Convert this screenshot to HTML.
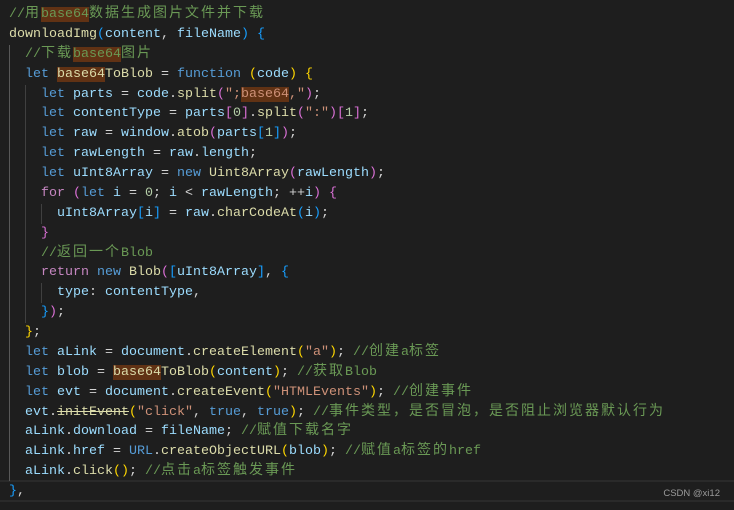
<!DOCTYPE html><html><head><meta charset="utf-8"><style>
html,body{margin:0;padding:0;background:#1e1e1e;width:734px;height:510px;overflow:hidden}
pre{position:absolute;left:9px;top:5px;margin:0;font-family:"Liberation Mono","Noto Sans CJK SC",monospace;font-size:13.33px;line-height:19.875px;color:#d4d4d4;white-space:pre}
i{font-style:normal;font-size:14px;letter-spacing:2px;line-height:0}
.c{color:#6a9955}.k{color:#569cd6}.v{color:#9cdcfe}.f{color:#dcdcaa}.s{color:#ce9178}.n{color:#b5cea8}.p{color:#c586c0}
.y{color:#ffd700}.m{color:#da70d6}.b{color:#179fff}.h{background:#613214}.st{text-decoration:line-through}
.g{position:absolute;width:1px;background:#404040}
.band{position:absolute;left:0;top:480px;width:734px;height:18px;border-top:2px solid #2a2a2a;border-bottom:2px solid #2a2a2a}
.wm{position:absolute;right:14px;top:488px;font-family:"Liberation Sans",sans-serif;font-size:9.5px;color:#9a9a9a}
</style></head><body>
<div class="band"></div>
<div class="g" style="left:9px;top:45px;height:436px;background:#585858"></div>
<div class="g" style="left:25px;top:85px;height:238px"></div>
<div class="g" style="left:41px;top:204px;height:20px"></div>
<div class="g" style="left:41px;top:283px;height:20px"></div>
<pre><span class="c">//<i>用</i><span class="h">base64</span><i>数据生成图片文件并下载</i></span>
<span class="f">downloadImg</span><span class="b">(</span><span class="v">content</span>, <span class="v">fileName</span><span class="b">)</span> <span class="b">{</span>
  <span class="c">//<i>下载</i><span class="h">base64</span><i>图片</i></span>
  <span class="k">let</span> <span class="f"><span class="h">base64</span>ToBlob</span> = <span class="k">function</span> <span class="y">(</span><span class="v">code</span><span class="y">)</span> <span class="y">{</span>
    <span class="k">let</span> <span class="v">parts</span> = <span class="v">code</span>.<span class="f">split</span><span class="m">(</span><span class="s">";<span class="h">base64</span>,"</span><span class="m">)</span>;
    <span class="k">let</span> <span class="v">contentType</span> = <span class="v">parts</span><span class="m">[</span><span class="n">0</span><span class="m">]</span>.<span class="f">split</span><span class="m">(</span><span class="s">":"</span><span class="m">)[</span><span class="n">1</span><span class="m">]</span>;
    <span class="k">let</span> <span class="v">raw</span> = <span class="v">window</span>.<span class="f">atob</span><span class="m">(</span><span class="v">parts</span><span class="b">[</span><span class="n">1</span><span class="b">]</span><span class="m">)</span>;
    <span class="k">let</span> <span class="v">rawLength</span> = <span class="v">raw</span>.<span class="v">length</span>;
    <span class="k">let</span> <span class="v">uInt8Array</span> = <span class="k">new</span> <span class="f">Uint8Array</span><span class="m">(</span><span class="v">rawLength</span><span class="m">)</span>;
    <span class="p">for</span> <span class="m">(</span><span class="k">let</span> <span class="v">i</span> = <span class="n">0</span>; <span class="v">i</span> &lt; <span class="v">rawLength</span>; ++<span class="v">i</span><span class="m">)</span> <span class="m">{</span>
      <span class="v">uInt8Array</span><span class="b">[</span><span class="v">i</span><span class="b">]</span> = <span class="v">raw</span>.<span class="f">charCodeAt</span><span class="b">(</span><span class="v">i</span><span class="b">)</span>;
    <span class="m">}</span>
    <span class="c">//<i>返回一个</i>Blob</span>
    <span class="p">return</span> <span class="k">new</span> <span class="f">Blob</span><span class="m">(</span><span class="b">[</span><span class="v">uInt8Array</span><span class="b">]</span>, <span class="b">{</span>
      <span class="v">type</span>: <span class="v">contentType</span>,
    <span class="b">}</span><span class="m">)</span>;
  <span class="y">}</span>;
  <span class="k">let</span> <span class="v">aLink</span> = <span class="v">document</span>.<span class="f">createElement</span><span class="y">(</span><span class="s">"a"</span><span class="y">)</span>; <span class="c">//<i>创建</i>a<i>标签</i></span>
  <span class="k">let</span> <span class="v">blob</span> = <span class="f"><span class="h">base64</span>ToBlob</span><span class="y">(</span><span class="v">content</span><span class="y">)</span>; <span class="c">//<i>获取</i>Blob</span>
  <span class="k">let</span> <span class="v">evt</span> = <span class="v">document</span>.<span class="f">createEvent</span><span class="y">(</span><span class="s">"HTMLEvents"</span><span class="y">)</span>; <span class="c">//<i>创建事件</i></span>
  <span class="v">evt</span>.<span class="f st">initEvent</span><span class="y">(</span><span class="s">"click"</span>, <span class="k">true</span>, <span class="k">true</span><span class="y">)</span>; <span class="c">//<i>事件类型，是否冒泡，是否阻止浏览器默认行为</i></span>
  <span class="v">aLink</span>.<span class="v">download</span> = <span class="v">fileName</span>; <span class="c">//<i>赋值下载名字</i></span>
  <span class="v">aLink</span>.<span class="v">href</span> = <span class="k">URL</span>.<span class="f">createObjectURL</span><span class="y">(</span><span class="v">blob</span><span class="y">)</span>; <span class="c">//<i>赋值</i>a<i>标签的</i>href</span>
  <span class="v">aLink</span>.<span class="f">click</span><span class="y">()</span>; <span class="c">//<i>点击</i>a<i>标签触发事件</i></span>
<span class="b">}</span>,</pre>
<div class="wm">CSDN @xi12</div>
</body></html>
